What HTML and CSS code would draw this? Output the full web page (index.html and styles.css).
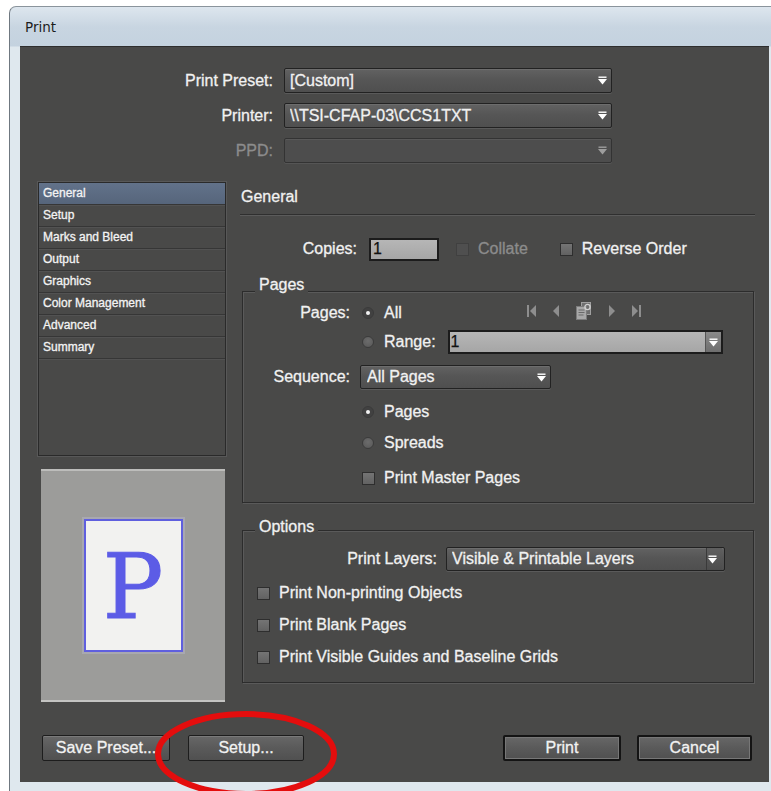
FILE: index.html
```html
<!DOCTYPE html>
<html lang="en">
<head>
<meta charset="utf-8">
<title>Print</title>
<link rel="stylesheet" href="styles.css">
</head>
<body>
<svg class="defs" width="0" height="0" aria-hidden="true">
  <defs>
    <symbol id="dd-arrow" viewBox="0 0 9 9">
      <rect x="0.5" y="0.5" width="8" height="1.4" fill="#fff"/>
      <path d="M0 3h9L4.5 8.5z" fill="#fff"/>
    </symbol>
  </defs>
</svg>

<div class="window">
  <div class="titlebar">Print</div>

  <div class="client">
    <div class="preset-grid">
      <span class="field-label">Print Preset:</span>
      <div class="select preset-select"><span class="select-text">[Custom]</span><svg class="arrow"><use href="#dd-arrow"/></svg></div>

      <span class="field-label">Printer:</span>
      <div class="select preset-select"><span class="select-text">\\TSI-CFAP-03\CCS1TXT</span><svg class="arrow"><use href="#dd-arrow"/></svg></div>

      <span class="field-label is-dim">PPD:</span>
      <div class="select preset-select is-disabled"><span class="select-text"></span><svg class="arrow"><use href="#dd-arrow"/></svg></div>
    </div>

    <div class="main">
      <div class="sidebar">
        <ul class="nav-list">
          <li class="nav-item is-active">General</li>
          <li class="nav-item">Setup</li>
          <li class="nav-item">Marks and Bleed</li>
          <li class="nav-item">Output</li>
          <li class="nav-item">Graphics</li>
          <li class="nav-item">Color Management</li>
          <li class="nav-item">Advanced</li>
          <li class="nav-item">Summary</li>
        </ul>
        <div class="preview">
          <div class="preview-page"><span class="preview-letter">P</span></div>
        </div>
      </div>

      <div class="panel">
        <div class="panel-title">General</div>

        <div class="copies-row">
          <span class="copies-label">Copies:</span>
          <div class="text-input copies-input">1</div>
          <span class="checkbox is-disabled collate-box"></span>
          <span class="check-text is-dim">Collate</span>
          <span class="checkbox reverse-box"></span>
          <span class="check-text">Reverse Order</span>
        </div>

        <div class="group pages-group">
          <div class="group-title">Pages</div>

          <div class="row row-pages">
            <span class="row-label">Pages:</span>
            <span class="radio is-on"></span>
            <span class="radio-text">All</span>
            <div class="page-nav">
              <svg width="9" height="14" viewBox="0 0 9 14"><rect x="0" y="1" width="2" height="12" fill="#8e8e8e"/><path d="M9 1v12L3 7z" fill="#8e8e8e"/></svg>
              <svg width="7" height="14" viewBox="0 0 7 14"><path d="M7 1v12L1 7z" fill="#8e8e8e"/></svg>
              <svg width="18" height="20" viewBox="0 0 18 20"><rect x="6.5" y="1.5" width="9" height="12" fill="#6f6f6f" stroke="#a0a0a0"/><rect x="1.5" y="5.5" width="10" height="13" fill="#a8a8a8" stroke="#7c7c7c"/><path d="M3.5 9h6M3.5 11.5h6M3.5 14h5" stroke="#6a6a6a"/><circle cx="12.5" cy="6" r="2.6" fill="none" stroke="#d2d2d2" stroke-width="1.3"/></svg>
              <svg width="7" height="14" viewBox="0 0 7 14"><path d="M0 1v12L6 7z" fill="#8e8e8e"/></svg>
              <svg width="9" height="14" viewBox="0 0 9 14"><path d="M0 1v12L6 7z" fill="#8e8e8e"/><rect x="7" y="1" width="2" height="12" fill="#8e8e8e"/></svg>
            </div>
          </div>

          <div class="row row-range">
            <span class="row-label"></span>
            <span class="radio"></span>
            <span class="radio-text">Range:</span>
            <div class="text-input range-input"><span class="input-value">1</span><span class="input-arrow"><svg class="arrow"><use href="#dd-arrow"/></svg></span></div>
          </div>

          <div class="row row-sequence">
            <span class="row-label">Sequence:</span>
            <div class="select sequence-select"><span class="select-text">All Pages</span><svg class="arrow"><use href="#dd-arrow"/></svg></div>
          </div>

          <div class="row row-indent row-gap-sm">
            <span class="radio is-on"></span>
            <span class="radio-text">Pages</span>
          </div>

          <div class="row row-indent row-gap-xs">
            <span class="radio"></span>
            <span class="radio-text">Spreads</span>
          </div>

          <div class="row row-indent row-gap-sm">
            <span class="checkbox"></span>
            <span class="check-text">Print Master Pages</span>
          </div>
        </div>

        <div class="group options-group">
          <div class="group-title">Options</div>

          <div class="row row-layers">
            <span class="row-label layers-label">Print Layers:</span>
            <div class="select layers-select"><span class="select-text">Visible &amp; Printable Layers</span><span class="input-arrow dark"><svg class="arrow"><use href="#dd-arrow"/></svg></span></div>
          </div>

          <div class="row option-check">
            <span class="checkbox"></span>
            <span class="check-text">Print Non-printing Objects</span>
          </div>
          <div class="row option-check">
            <span class="checkbox"></span>
            <span class="check-text">Print Blank Pages</span>
          </div>
          <div class="row option-check">
            <span class="checkbox"></span>
            <span class="check-text">Print Visible Guides and Baseline Grids</span>
          </div>
        </div>
      </div>
    </div>

    <div class="buttons">
      <button class="btn btn-save">Save Preset...</button>
      <button class="btn btn-setup">Setup...</button>
      <span class="spacer"></span>
      <button class="btn btn-print is-default">Print</button>
      <button class="btn btn-cancel is-default">Cancel</button>
    </div>
  </div>

  <!-- red marker ring drawn around the Setup button -->
  <svg class="highlight-ring" width="190" height="85" viewBox="0 0 190 85">
    <ellipse cx="93" cy="47" rx="88" ry="40" fill="none" stroke="#e40d0d" stroke-width="6"/>
  </svg>
</div>
</body>
</html>
```

FILE: styles.css
```css
html, body {
  margin: 0;
  padding: 0;
  overflow: hidden;
  background: #ffffff;
}

body {
  width: 771px;
  height: 791px;
  font-family: "Liberation Sans", Arial, sans-serif;
}

.defs {
  position: absolute;
  width: 0;
  height: 0;
}

/* window frame */
.window {
  position: relative;
  margin: 6px 0 0 9px;
  height: 785px;
  box-sizing: border-box;
  padding: 0 2px 0 10px;
  border-top: 1px solid #8a949c;
  border-left: 1px solid #6f7880;
  border-top-left-radius: 7px;
  background: linear-gradient(180deg, #dde6ee 0px, #c8d5e1 20px, #c4d2df 39px, #dfe8ee 40px, #dfe8ee 100%);
}

.titlebar {
  height: 39px;
  padding-left: 5px;
  display: flex;
  align-items: center;
  font-family: "DejaVu Sans", sans-serif;
  font-size: 13.5px;
  color: #1d1d1d;
}

.client {
  height: 736px;
  box-sizing: border-box;
  background: #494948;
  color: #f1f1f1;
  font-size: 16px;
  -webkit-text-stroke: 0.3px currentColor;
  border-top: 1px solid #2e2e2e;
  display: flex;
  flex-direction: column;
}

/* print preset / printer / ppd */
.preset-grid {
  display: grid;
  grid-template-columns: 253px 328px;
  grid-auto-rows: 25px;
  column-gap: 11px;
  row-gap: 10px;
  padding-top: 21px;
}

.field-label {
  display: flex;
  align-items: center;
  justify-content: flex-end;
}

.is-dim {
  color: #8c8c8c;
}

/* dropdowns */
.select {
  box-sizing: border-box;
  display: flex;
  align-items: center;
  border: 1px solid #222222;
  border-radius: 2px;
  background: linear-gradient(180deg, #626262 0%, #565656 45%, #4f4f4f 100%);
  box-shadow: inset 0 1px 0 #6d6d6d, 0 1px 0 #5a5a5a;
  padding-left: 5px;
  height: 25px;
}

.select-text {
  flex: 1;
  white-space: nowrap;
  overflow: hidden;
}

.select .arrow {
  width: 9px;
  height: 9px;
  margin-right: 4px;
  flex: none;
}

.select.is-disabled {
  background: #4d4d4d;
  border-color: #333;
  box-shadow: inset 0 1px 0 #585858, 0 1px 0 #555;
}

.select.is-disabled .arrow {
  opacity: 0.45;
}

/* main area */
.main {
  display: flex;
  margin-top: 19px;
  height: 520px;
  padding-left: 18px;
  padding-right: 14px;
  gap: 14px;
}

.sidebar {
  width: 188px;
  display: flex;
  flex-direction: column;
}

.nav-list {
  list-style: none;
  margin: 0;
  padding: 0;
  height: 274px;
  box-sizing: border-box;
  border: 1px solid #2a2a2a;
  box-shadow: 0 0 0 1px #585858;
  font-size: 12px;
}

.nav-item {
  height: 22px;
  box-sizing: border-box;
  line-height: 21px;
  padding-left: 4px;
  border-bottom: 1px solid #363636;
  box-shadow: 0 1px 0 #525252;
  color: #f3f3f3;
}

.nav-item.is-active {
  background: linear-gradient(180deg, #62728a, #56657b);
}

.preview {
  margin: 13px 1px 0 3px;
  height: 233px;
  box-sizing: border-box;
  background: #9c9c9a;
  border-top: 2px solid #bdbdbb;
  border-bottom: 2px solid #c4c4c2;
  display: flex;
  align-items: center;
  justify-content: center;
}

.preview-page {
  width: 99px;
  height: 133px;
  box-sizing: border-box;
  background: #f2f2f0;
  border: 2px solid #5f5fde;
  display: flex;
  align-items: center;
  justify-content: center;
  box-shadow: 0 0 0 2px #a8a8b0;
}

.preview-letter {
  font-family: "DejaVu Serif", "Liberation Serif", serif;
  font-weight: normal;
  font-size: 90px;
  line-height: 1;
  color: #5c5ce6;
  -webkit-text-stroke: 1px #5c5ce6;
  margin-top: 2px;
}

/* right panel */
.panel {
  flex: 1;
  display: flex;
  flex-direction: column;
}

.panel-title {
  height: 33px;
  box-sizing: border-box;
  padding: 5px 0 0 1px;
  line-height: 20px;
  border-bottom: 1px solid #2f2f2f;
  box-shadow: 0 1px 0 #5b5b5b;
}

.copies-row {
  display: flex;
  align-items: center;
  height: 24px;
  margin-top: 22px;
}

.copies-label {
  width: 117px;
  text-align: right;
  margin-right: 12px;
}

.text-input {
  box-sizing: border-box;
  height: 24px;
  border: 2px solid #1c1c1c;
  background: linear-gradient(180deg, #b6b6b6, #a6a6a6);
  color: #111;
  -webkit-text-stroke: 0.25px #111;
  display: flex;
  align-items: center;
  padding-left: 2px;
}

.copies-input {
  width: 70px;
  height: 23px;
}

.checkbox {
  width: 13px;
  height: 13px;
  box-sizing: border-box;
  border: 1px solid #2e2e2e;
  background: linear-gradient(180deg, #747474, #626262);
  flex: none;
}

.checkbox.is-disabled {
  border-color: #404040;
  background: #4f4f4f;
}

.collate-box {
  margin-left: 17px;
}

.reverse-box {
  margin-left: 32px;
}

.check-text {
  margin-left: 9px;
  white-space: nowrap;
}

/* grouped sections */
.group {
  margin: 0 1px 0 2px;
  border: 1px solid #2c2c2c;
  box-shadow: inset 1px 1px 0 #5a5a5a, 1px 1px 0 #5a5a5a;
  display: flex;
  flex-direction: column;
}

.group-title {
  align-self: flex-start;
  height: 20px;
  line-height: 20px;
  margin-left: 12px;
  padding: 0 4px;
  background: #494948;
}

.pages-group {
  margin-top: 30px;
  padding-bottom: 12px;
}

.pages-group .group-title {
  margin-top: -17px;
}

.options-group {
  margin-top: 27px;
  padding-bottom: 13px;
}

.options-group .group-title {
  margin-top: -14px;
}

.row {
  display: flex;
  align-items: center;
  height: 24px;
  flex: none;
}

.row-label {
  width: 107px;
  text-align: right;
  margin-right: 12px;
  flex: none;
}

.row-pages {
  margin-top: 6px;
}

.row-range {
  margin-top: 5px;
}

.row-sequence {
  margin-top: 11px;
}

.row-sequence .row-label {
  margin-right: 10px;
}

.row-indent {
  padding-left: 119px;
}

.row-gap-sm {
  margin-top: 11px;
}

.row-gap-xs {
  margin-top: 7px;
}

.radio {
  width: 12px;
  height: 12px;
  box-sizing: border-box;
  border-radius: 50%;
  border: 1px solid #3b3b3b;
  background: radial-gradient(circle at 50% 40%, #6c6c6c, #575757);
  flex: none;
  display: flex;
  align-items: center;
  justify-content: center;
}

.radio.is-on {
  background: #414141;
}

.radio.is-on::after {
  content: "";
  width: 4px;
  height: 4px;
  border-radius: 50%;
  background: #f2f2f2;
}

.radio-text {
  margin-left: 10px;
}

.page-nav {
  display: flex;
  align-items: center;
  gap: 16px;
  margin-left: 125px;
  margin-top: -4px;
}

.range-input {
  width: 275px;
  margin-left: 12px;
  padding-left: 1px;
  padding-right: 0;
}

.input-value {
  flex: 1;
}

.input-arrow {
  width: 15px;
  align-self: stretch;
  display: flex;
  align-items: center;
  justify-content: center;
  background: linear-gradient(180deg, #8a8a8a, #6e6e6e);
  border-left: 1px solid #555;
}

.input-arrow .arrow {
  width: 9px;
  height: 9px;
}

.input-arrow.dark {
  background: linear-gradient(180deg, #5f5f5f, #4d4d4d);
  border-left: 1px solid #3a3a3a;
  height: 100%;
}

.sequence-select {
  width: 191px;
  height: 24px;
  padding-left: 6px;
}

.layers-label {
  width: 194px;
  margin-right: 9px;
}

.row-layers {
  margin-top: 10px;
}

.layers-select {
  width: 279px;
  height: 24px;
  padding-right: 2px;
}

.option-check {
  padding-left: 14px;
  margin-top: 8px;
}

.option-check:nth-child(3) {
  margin-top: 10px;
}

/* dialog buttons */
.buttons {
  display: flex;
  align-items: center;
  margin-top: 33px;
  padding: 0 17px 0 22px;
  gap: 18px;
}

.spacer {
  flex: 1;
}

.btn {
  height: 26px;
  box-sizing: border-box;
  font-family: "Liberation Sans", Arial, sans-serif;
  font-size: 16px;
  color: #f2f2f2;
  -webkit-text-stroke: 0.3px #f2f2f2;
  border: 1px solid #1d1d1d;
  border-radius: 2px;
  background: linear-gradient(180deg, #676767 0%, #5a5a5a 50%, #505050 100%);
  box-shadow: inset 0 1px 0 #7a7a7a;
  padding: 0;
}

.btn.is-default {
  border: 2px solid #141414;
  box-shadow: inset 0 0 0 1px #777;
}

.btn-save {
  width: 128px;
}

.btn-setup {
  width: 116px;
}

.btn-print {
  width: 118px;
  margin-right: -2px;
}

.btn-cancel {
  width: 115px;
}

/* annotation overlay */
.highlight-ring {
  position: absolute;
  left: 143px;
  top: 700px;
}
```
